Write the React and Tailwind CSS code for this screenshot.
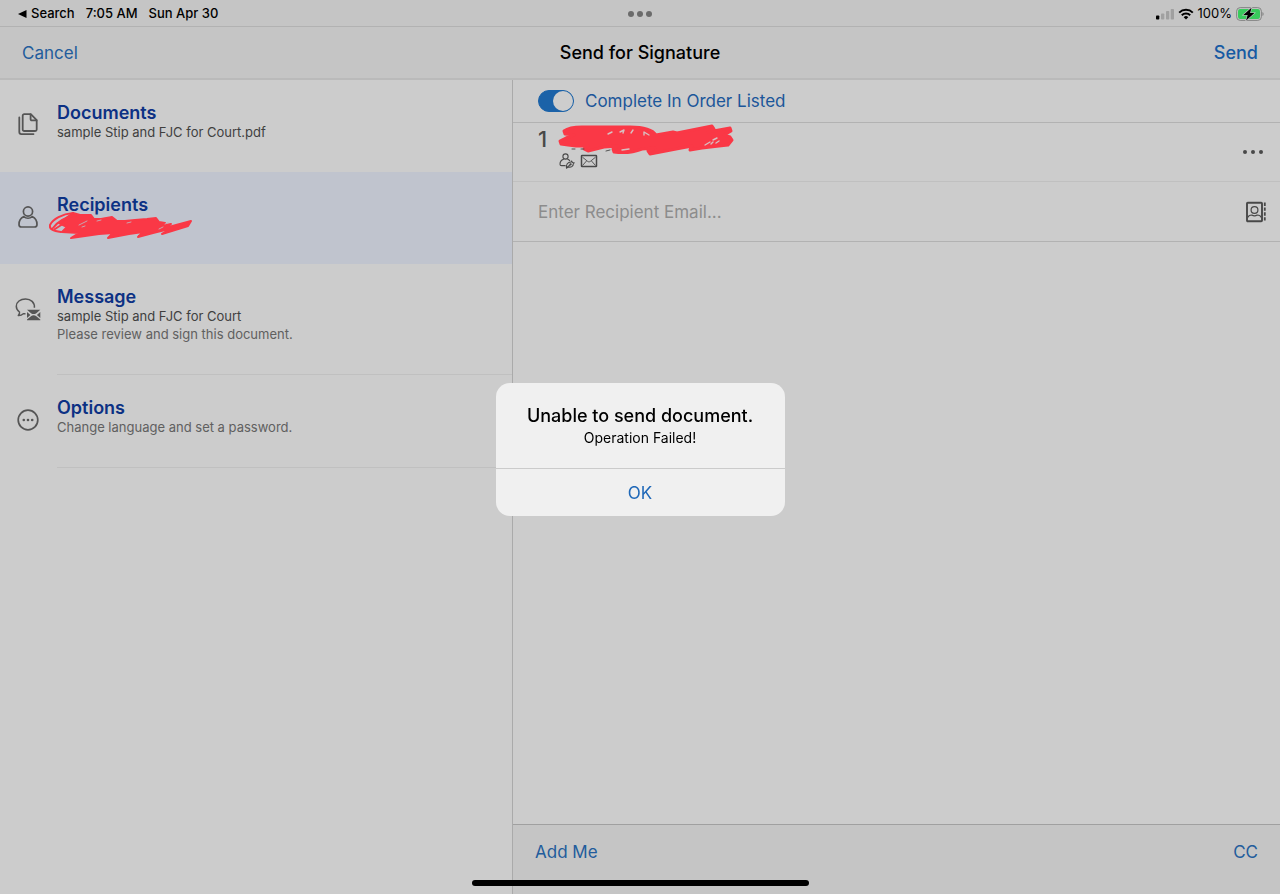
import { useState } from 'react'

const sections = [
  {
    id: 'documents',
    title: 'Documents',
    subtitle: 'sample Stip and FJC for Court.pdf',
    icon: DocumentsIcon,
  },
  { id: 'recipients', title: 'Recipients', redacted: true, icon: PersonIcon },
  {
    id: 'message',
    title: 'Message',
    subtitle: 'sample Stip and FJC for Court',
    note: 'Please review and sign this document.',
    icon: MessageIcon,
    divider: true,
  },
  {
    id: 'options',
    title: 'Options',
    note: 'Change language and set a password.',
    icon: OptionsIcon,
    divider: true,
  },
]

function DocumentsIcon() {
  return (
    <svg width="26" height="26" viewBox="0 0 26 26" fill="none" stroke="currentColor" strokeWidth="1.8" strokeLinejoin="round" strokeLinecap="round">
      <path d="M9.200 2.200h6.600l5.900 5.900v9.400a1.500 1.500 0 0 1-1.500 1.500H9.200a1.500 1.500 0 0 1-1.500-1.500V3.700a1.500 1.500 0 0 1 1.500-1.500z" />
      <path d="M15.600 2.500v4.700a1.200 1.200 0 0 0 1.200 1.200h4.700" />
      <path d="M4.300 5.500v14.600a2 2 0 0 0 2 2H18.500" />
    </svg>
  )
}

function PersonIcon() {
  return (
    <svg width="26" height="26" viewBox="0 0 26 26" fill="none" stroke="currentColor" strokeWidth="1.700">
      <circle cx="13" cy="7.500" r="4.600" />
      <path d="M8.800 12.600C5.800 14 4 17.200 4 20.500c0 1.700 1 2.500 2.500 2.500h13c1.500 0 2.500-.8 2.500-2.500 0-3.300-1.800-6.500-4.800-7.900a6.600 6.600 0 0 1-8.400 0z" strokeLinejoin="round" />
    </svg>
  )
}

function MessageIcon() {
  return (
    <svg width="26" height="26" viewBox="0 0 26 26" fill="none">
      <path d="M19.400 11.800c.5-5.300-3.600-8.800-8.800-8.800C5.300 3 1.300 6 1.300 10.200c0 2.500 1.300 4.500 3.200 5.800.2 1.100-.3 2.400-1.200 3.400 2 .1 3.800-.6 5-1.700h2.200" stroke="currentColor" strokeWidth="1.500" strokeLinejoin="round" />
      <path d="M12 13.800h13.300l-4.300 3.600c-1.300.9-3.400.9-4.700 0z" fill="currentColor" />
      <path d="M12 15.900v6l3.400-3zM25.300 15.900v6l-3.400-3z" fill="currentColor" />
      <path d="M12 24.300v-.9l4.300-3.500c1.300-.9 3.400-.9 4.700 0l4.300 3.500v.9z" fill="currentColor" />
    </svg>
  )
}

function OptionsIcon() {
  return (
    <svg width="26" height="26" viewBox="0 0 26 26" fill="none">
      <circle cx="13" cy="13" r="9.800" stroke="currentColor" strokeWidth="1.700" />
      <circle cx="8.800" cy="13" r="1.300" fill="currentColor" />
      <circle cx="13" cy="13" r="1.300" fill="currentColor" />
      <circle cx="17.200" cy="13" r="1.300" fill="currentColor" />
    </svg>
  )
}

function SignerIcon() {
  return (
    <svg width="16" height="16" viewBox="0 0 16 16" fill="none" stroke="currentColor" strokeWidth="1.1" strokeLinejoin="round" strokeLinecap="round">
      <circle cx="6.500" cy="3.500" r="2.600" />
      <path d="M4.500 6.200C2.200 7 1 8.800 1 11.200c0 1 .5 1.400 1.500 1.400h3.700M8.700 6.200c.9.300 1.500.8 2 1.400" />
      <path d="M7.500 15c-.5-3.200 1-6 4.500-6l.6-1 .8 1.500 1.800.2-.9 1.100c.1 2.600-2.200 3.800-5.100 3.200z" />
      <path d="M7.500 15l4-3.600" />
      <circle cx="11.600" cy="11.300" r=".6" />
    </svg>
  )
}

function MailIcon() {
  return (
    <svg width="18" height="14" viewBox="0 0 18 14" fill="none" stroke="currentColor" strokeLinejoin="round">
      <rect x="1.500" y="1.500" width="15" height="11" rx=".6" strokeWidth="1.500" />
      <path d="M2.500 3.200l5.200 4.200c.8.600 1.800.6 2.600 0l5.200-4.200M2.500 11.500l4-4.500M15.500 11.500l-4-4.500" strokeWidth=".9" />
    </svg>
  )
}

function ContactsIcon() {
  return (
    <svg width="22" height="22" viewBox="0 0 22 22" fill="none" stroke="currentColor">
      <rect x="2" y="1.700" width="15" height="18.600" rx=".8" strokeWidth="1.900" />
      <circle cx="9.500" cy="9" r="3.400" strokeWidth="1.200" />
      <path d="M3 16.500c.3-1.900 1.700-2.500 3.800-2.500 1.500 1 3.900 1 5.400 0 2.100 0 3.500.6 3.800 2.500" strokeWidth="1.200" />
      <path d="M19.800 1.500v19" strokeWidth="1.800" strokeDasharray="3.400 1.500" />
    </svg>
  )
}

function SidebarScribble() {
  return (
    <svg className="absolute -left-2 -top-1" width="146" height="32" viewBox="0 0 146 32" fill="none" strokeLinejoin="round" strokeLinecap="round">
      <path
        d="M10 12L24 2 31 4 42 4 45 8 52 8 63 6 68 10 76 10 86 9 98 8 107 7 110 11 116 12 112 15 122 13 116 17 142 10 139 15 113 23 124 17 104 22 89 26 94 21 80 23 59 27 64 22 50 23 22 27 30 22 13 21 18 16z"
        fill="#fa3846"
        stroke="#fa3846"
        strokeWidth="2"
      />
      <path d="M12 21C4 20 0 18 1 14 4 8 13 3 24 2M4 17C9 10 17 6 27 4M6 18l14-9" stroke="#fa3846" strokeWidth="2" />
      <path d="M30 14l8-4M33 16l3-1M48 10l4-1M110 18l4-2M116 13l3-1M78 12l4-1" stroke="#c9a5b0" strokeWidth="1" />
    </svg>
  )
}

function RecipientScribble() {
  return (
    <svg width="178" height="34" viewBox="0 0 178 34" fill="none" strokeLinejoin="round" strokeLinecap="round">
      <path
        d="M6 8C10 5 16 4 24 4L72 4C83 4 94 6 98 12L115 9 119 10 154 3 156 6 150 9 172 5 173 8 166 12 172 14 174 17 170 22 161 23 144 25 132 27 134 23 118 26 92 31 90 28 97 25 84 26C74 30 64 30 56 29L55 26 60 23 46 24 30 28 26 26 30 23 18 23 10 22 3 21 2 18 8 15 16 12 7 11z"
        fill="#fa3846"
        stroke="#fa3846"
        strokeWidth="3"
      />
      <path d="M50 11l4-2M62 9l4-2-1 3M73 10l2-3M86 12v-3l5 3M64 27l7-1M147 22l5-3M153 21l2-2M158 20l3-2M155 17l4-2" stroke="#d8bfc0" strokeWidth="1.400" />
      <path d="M14 26h3M23 26h3M48 28l4-1" stroke="#555555" strokeWidth="1" />
    </svg>
  )
}

function StatusBar() {
  return (
    <div className="relative flex h-[27px] items-center justify-between border-b border-[#b2b2b2] bg-[#c5c5c5] pl-[18px] pr-4 pt-px text-[13px] font-medium text-black">
      <div className="flex items-center gap-[11px]">
        <button className="flex items-center gap-1">
          <svg width="9" height="8" viewBox="0 0 9 8">
            <path d="M0 4L8.500 0v8z" fill="currentColor" />
          </svg>
          Search
        </button>
        <span>7:05 AM</span>
        <span>Sun Apr 30</span>
      </div>
      <div className="absolute inset-x-0 flex justify-center gap-[3px]">
        <span className="size-[6px] rounded-full bg-[#6b6b6b]" />
        <span className="size-[6px] rounded-full bg-[#6b6b6b]" />
        <span className="size-[6px] rounded-full bg-[#6b6b6b]" />
      </div>
      <div className="flex items-center gap-1">
        <svg width="18" height="12" viewBox="0 0 18 12">
          <rect x="0" y="7.500" width="3.300" height="4" rx=".8" fill="#000" />
          <rect x="5" y="5.500" width="3.300" height="6" rx=".8" fill="#a0a0a0" />
          <rect x="10" y="3" width="3.300" height="8.500" rx=".8" fill="#a0a0a0" />
          <rect x="14.700" y="1" width="3.300" height="10.500" rx=".8" fill="#a0a0a0" />
        </svg>
        <svg width="16" height="12" viewBox="0 0 16 12" fill="none" stroke="#000" strokeWidth="2">
          <path d="M1.200 4.600a9.700 9.700 0 0 1 13.600 0M3.800 7.300a6 6 0 0 1 8.400 0" />
          <path d="M8 11.500L5.700 9.200a3.300 3.300 0 0 1 4.600 0z" fill="#000" stroke="none" />
        </svg>
        <span className="font-normal">100%</span>
        <svg width="28" height="14" viewBox="0 0 28 14">
          <rect x=".6" y=".6" width="24.800" height="12.800" rx="3.600" fill="none" stroke="#858585" />
          <rect x="2" y="2" width="22" height="10" rx="2.200" fill="#38cb5c" />
          <path d="M26.500 5v4c1.400-.6 1.400-3.400 0-4z" fill="#777" />
          <path d="M15.500.8L7.300 8h4.300l-1.500 5.400L18.400 6h-4.300z" fill="#000" stroke="#c5c5c5" strokeWidth="1.200" paintOrder="stroke" />
        </svg>
      </div>
    </div>
  )
}

function App() {
  const [active, setActive] = useState('recipients')
  const [inOrder, setInOrder] = useState(true)
  const [email, setEmail] = useState('')
  const [alertOpen, setAlertOpen] = useState(true)

  return (
    <div className="relative flex min-h-screen flex-col bg-[#cccccc] font-['Inter',sans-serif]">
      <StatusBar />

      <header className="grid h-[53px] grid-cols-3 items-center border-b-2 border-[#bababa] bg-[#c5c5c5] px-[22px] leading-6">
        <button className="justify-self-start text-[17px] text-[#225c9c]">Cancel</button>
        <h1 className="justify-self-center text-[18px] font-medium text-black">Send for Signature</h1>
        <button className="justify-self-end text-[18px] font-medium text-[#175aa3]">Send</button>
      </header>

      <div className="flex flex-1">
        <nav className="w-2/5">
          {sections.map((section) => {
            const Icon = section.icon
            return (
              <button
                key={section.id}
                onClick={() => setActive(section.id)}
                className={`flex w-full items-start text-left ${
                  active === section.id ? 'bg-[#c0c4ce]' : ''
                }`}
              >
                <span className="w-[57px] shrink-0 pl-[15px] pt-8 text-[#555555]">
                  <Icon />
                </span>
                <span
                  className={`flex flex-1 flex-col pb-[31px] pt-[22px] text-[13px] leading-[18px] ${
                    section.divider ? 'border-b border-[#c0c0c0]' : ''
                  }`}
                >
                  <span className="text-[18px] font-semibold leading-[21px] text-[#0c3184]">{section.title}</span>
                  {section.subtitle && <span className="text-[#3f3f3f]">{section.subtitle}</span>}
                  {section.redacted && (
                    <span className="relative h-[18px]">
                      <SidebarScribble />
                    </span>
                  )}
                  {section.note && <span className="text-[#606060]">{section.note}</span>}
                </span>
              </button>
            )
          })}
        </nav>

        <main className="flex flex-1 flex-col border-l border-[#aaaaaa]">
          <div className="flex h-[43px] items-center gap-[11px] border-b border-[#b2b2b2] pl-[25px]">
            <input
              id="in-order"
              type="checkbox"
              role="switch"
              checked={inOrder}
              onChange={(e) => setInOrder(e.target.checked)}
              className="flex h-[22px] w-9 appearance-none items-center rounded-full border border-[#1b62a8] bg-[#cccccc] before:size-5 before:rounded-full before:bg-[#cdcdcd] checked:justify-end checked:bg-[#1b62a8]"
            />
            <label htmlFor="in-order" className="text-[17px] leading-6 text-[#1b569a]">
              Complete In Order Listed
            </label>
          </div>

          <div className="flex h-[59px] items-center border-b border-[#c0c0c0] pl-[25px] pr-4 text-[#484848]">
            <span className="w-5 self-start pt-1 text-[22px] font-medium leading-6">1</span>
            <div className="flex-1 self-start">
              <RecipientScribble />
              <div className="-mt-1 flex items-center gap-[5px] pl-px">
                <SignerIcon />
                <MailIcon />
              </div>
            </div>
            <button aria-label="More" className="flex gap-1 p-px">
              <span className="size-1 rounded-full bg-[#484848]" />
              <span className="size-1 rounded-full bg-[#484848]" />
              <span className="size-1 rounded-full bg-[#484848]" />
            </button>
          </div>

          <div className="flex h-[60px] items-center border-b border-[#b2b2b2] pl-[25px] pr-[13px]">
            <input
              type="email"
              aria-label="Recipient email"
              placeholder="Enter Recipient Email..."
              value={email}
              onChange={(e) => setEmail(e.target.value)}
              className="flex-1 bg-transparent text-[17px] leading-6 text-black outline-none placeholder:text-[#8c8c8c]"
            />
            <button aria-label="Contacts" className="text-[#484848]">
              <ContactsIcon />
            </button>
          </div>

          <footer className="mt-auto flex h-[70px] items-start justify-between border-t border-[#a0a0a0] bg-[#c5c5c5] px-[22px] pt-[15px] text-[17px] leading-6 text-[#225c9c]">
            <button>Add Me</button>
            <button>CC</button>
          </footer>
        </main>
      </div>

      <div className="absolute inset-x-0 bottom-2 flex justify-center">
        <div className="h-[6px] w-[337px] rounded-full bg-black" />
      </div>

      {alertOpen && (
        <div className="fixed inset-0 flex items-center justify-center pt-1">
          <div
            role="alertdialog"
            aria-labelledby="alert-title"
            aria-describedby="alert-text"
            className="w-[289px] overflow-hidden rounded-[14px] bg-[#f0f0f0] text-center text-black"
          >
            <div className="border-b border-[#cbcbcb] pb-5 pt-[21px]">
              <h2 id="alert-title" className="text-[18px] font-medium leading-6">
                Unable to send document.
              </h2>
              <p id="alert-text" className="text-[14px] leading-5">
                Operation Failed!
              </p>
            </div>
            <button
              onClick={() => setAlertOpen(false)}
              className="h-[47px] w-full pt-0.5 text-[17px] leading-6 text-[#1f68b8]"
            >
              OK
            </button>
          </div>
        </div>
      )}
    </div>
  )
}

export default App
